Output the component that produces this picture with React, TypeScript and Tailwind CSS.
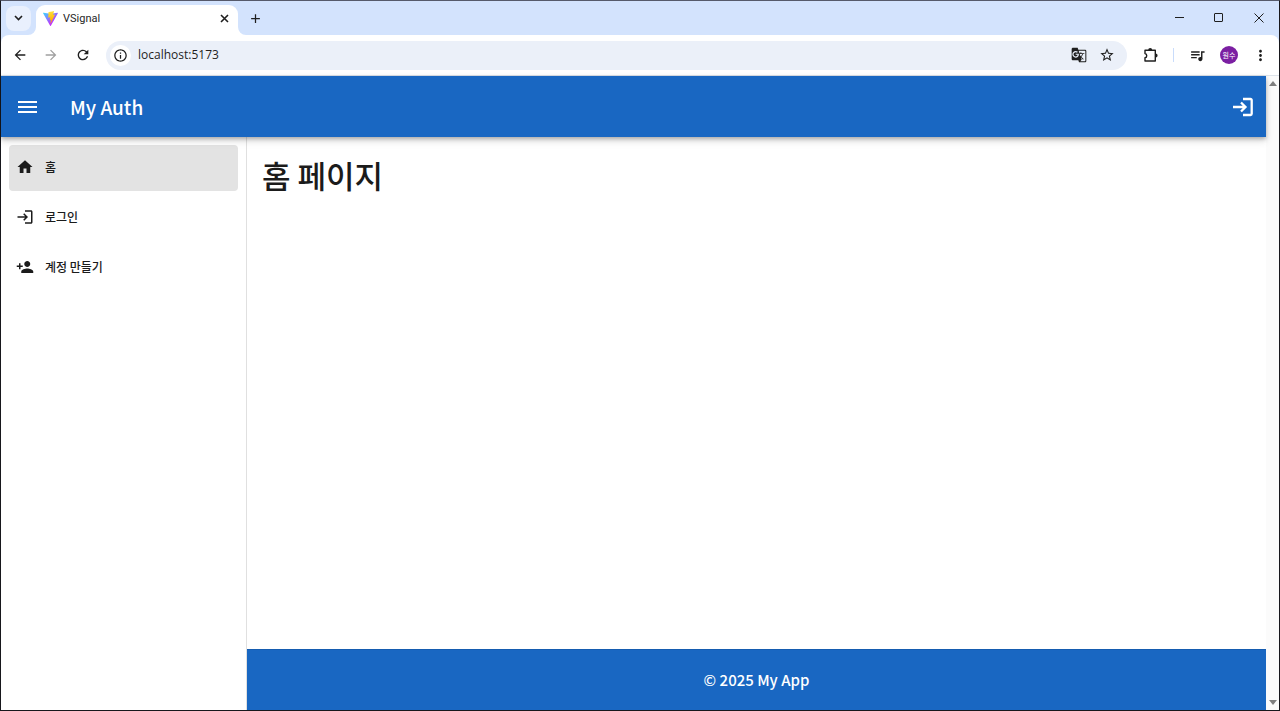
import type { ReactNode } from "react";
import {
  MdAdd,
  MdArrowBack,
  MdArrowForward,
  MdGTranslate,
  MdHome,
  MdInfoOutline,
  MdLogin,
  MdMoreVert,
  MdPersonAdd,
  MdQueueMusic,
  MdRefresh,
  MdStarOutline,
} from "react-icons/md";

interface NavItem {
  label: string;
  href: string;
  icon: ReactNode;
}

const navItems: NavItem[] = [
  { label: "홈", href: "#home", icon: <MdHome size={18} /> },
  { label: "로그인", href: "#login", icon: <MdLogin size={18} /> },
  { label: "계정 만들기", href: "#register", icon: <MdPersonAdd size={18} /> },
];

function ViteLogo() {
  return (
    <svg width="15" height="15" viewBox="0 0 256 257" aria-hidden="true">
      <defs>
        <linearGradient id="vite-body" x1="0%" x2="58%" y1="8%" y2="79%">
          <stop offset="0%" stopColor="#41D1FF" />
          <stop offset="100%" stopColor="#BD34FE" />
        </linearGradient>
        <linearGradient id="vite-bolt" x1="43%" x2="50%" y1="2%" y2="89%">
          <stop offset="0%" stopColor="#FFEA83" />
          <stop offset="8%" stopColor="#FFDD35" />
          <stop offset="100%" stopColor="#FFA800" />
        </linearGradient>
      </defs>
      <path
        fill="url(#vite-body)"
        d="M255 38 134 253c-2 5-9 5-12 0L1 38c-3-5 1-11 7-10l120 21a7 7 0 0 0 2 0l117-21c6-1 10 5 8 10Z"
      />
      <path
        fill="url(#vite-bolt)"
        d="M185 0 97 17a3 3 0 0 0-3 3l-5 91a3 3 0 0 0 4 4l25-6c2-1 4 1 4 4l-8 36c0 2 2 5 4 4l15-5c3-1 5 2 4 4l-11 56c-1 4 4 6 6 3l1-2 72-143c1-3-1-5-4-5l-25 5c-3 0-5-2-4-4l17-58c1-2-1-4-4-4Z"
      />
    </svg>
  );
}

function PuzzleIcon() {
  return (
    <svg
      width="16"
      height="16"
      viewBox="0 0 16 16"
      fill="none"
      stroke="currentColor"
      strokeWidth="1.4"
      strokeLinejoin="round"
      aria-hidden="true"
    >
      <path d="M2 3.300h10.300v10.700H2v-3.200a2.200 2.200 0 0 0 0-4.300Z" />
      <path
        fill="currentColor"
        stroke="none"
        d="M5.200 3a2 2 0 0 1 4 0ZM12.600 6.600a2 2 0 0 1 0 4Z"
      />
    </svg>
  );
}

function MenuIcon() {
  return (
    <svg width="25" height="25" stroke="currentColor" strokeWidth="2" aria-hidden="true">
      <path d="M3 8h19M3 13h19M3 18h19" />
    </svg>
  );
}

function LoginIcon() {
  return (
    <svg
      width="24"
      height="24"
      viewBox="0 0 24 24"
      fill="none"
      stroke="currentColor"
      strokeWidth="2.300"
      aria-hidden="true"
    >
      <path d="M12 4h7.500a1.200 1.200 0 0 1 1.200 1.200v13.600a1.200 1.200 0 0 1-1.200 1.200H12" />
      <path d="M2 12h12M10 7.500l4.500 4.500-4.500 4.500" />
    </svg>
  );
}

function TabStrip() {
  return (
    <div className="flex h-[34px] shrink-0 items-center bg-[#d3e3fd] text-[#1f1f1f]">
      <button
        aria-label="Search tabs"
        className="ml-[5px] flex size-[25px] items-center justify-center rounded-lg bg-[#e9f0fd]"
      >
        <svg width="9" height="6" fill="none" stroke="currentColor" strokeWidth="1.600" aria-hidden="true">
          <path d="m1 1 3.500 3.500L8 1" />
        </svg>
      </button>
      <div className="relative ml-[5px] flex h-[30px] w-[202px] items-center self-end rounded-t-[9px] bg-white pr-[9px] pb-1 pl-[7px]">
        <svg className="absolute bottom-0 -left-2" width="8" height="8" aria-hidden="true">
          <path d="M8 0v8H0a8 8 0 0 0 8-8Z" fill="#fff" />
        </svg>
        <svg className="absolute -right-2 bottom-0" width="8" height="8" aria-hidden="true">
          <path d="M0 0v8h8a8 8 0 0 1-8-8Z" fill="#fff" />
        </svg>
        <ViteLogo />
        <span className="ml-[5px] flex-1 pt-[2px] font-[Roboto,sans-serif] text-[11px]">VSignal</span>
        <button aria-label="Close tab">
          <svg width="9" height="9" stroke="currentColor" strokeWidth="1.600" aria-hidden="true">
            <path d="m1 1 7 7M8 1 1 8" />
          </svg>
        </button>
      </div>
      <button aria-label="New tab" className="ml-[10px]">
        <MdAdd size={15} />
      </button>
      <div className="ml-auto flex items-center">
        <button aria-label="Minimize" className="flex w-10 justify-center">
          <svg width="9" height="9" stroke="currentColor" aria-hidden="true">
            <path d="M0 3.500h9" />
          </svg>
        </button>
        <button aria-label="Maximize" className="flex w-10 justify-center">
          <svg width="10" height="10" fill="none" stroke="currentColor" aria-hidden="true">
            <rect x="0.5" y="0.5" width="8" height="8" rx="0.5" />
          </svg>
        </button>
        <button aria-label="Close" className="flex w-10 justify-center">
          <svg width="10" height="10" stroke="currentColor" aria-hidden="true">
            <path d="m.5.5 9 9M9.500.500l-9 9" />
          </svg>
        </button>
      </div>
    </div>
  );
}

function Toolbar() {
  return (
    <div className="shrink-0 bg-[#d3e3fd]">
      <div className="flex h-[41px] items-center rounded-t-lg border-b border-[#dde3ea] bg-white pl-[11px] text-[#1f1f1f]">
        <button aria-label="Back">
          <MdArrowBack size={16} />
        </button>
        <button aria-label="Forward" className="ml-[15px] text-[#a0a0a0]" disabled>
          <MdArrowForward size={16} />
        </button>
        <button aria-label="Reload" className="ml-4">
          <MdRefresh size={16} />
        </button>
        <div className="ml-[15px] flex h-[29px] flex-1 items-center rounded-full bg-[#ebf0f9] pr-3 pl-1">
          <button
            aria-label="Site information"
            className="flex size-[21px] items-center justify-center rounded-full bg-white"
          >
            <MdInfoOutline size={15} />
          </button>
          <input
            aria-label="Address"
            defaultValue="localhost:5173"
            className="ml-[7px] min-w-0 flex-1 bg-transparent font-['Open_Sans',sans-serif] text-[12px] outline-none"
          />
          <button aria-label="Translate this page">
            <MdGTranslate size={16} />
          </button>
          <button aria-label="Bookmark this tab" className="ml-3">
            <MdStarOutline size={16} />
          </button>
        </div>
        <button aria-label="Extensions" className="ml-4">
          <PuzzleIcon />
        </button>
        <span className="ml-[14px] h-[14px] w-px bg-[#c9dcfb]" />
        <button aria-label="Media control" className="ml-[15px]">
          <MdQueueMusic size={17} />
        </button>
        <button
          aria-label="Profile"
          className="ml-[14px] flex size-[18px] items-center justify-center rounded-full bg-[#7b1fa2] font-['Noto_Sans_CJK_KR',sans-serif] text-[7px] text-white"
        >
          원수
        </button>
        <button aria-label="Menu" className="mr-[10px] ml-[14px]">
          <MdMoreVert size={17} />
        </button>
      </div>
    </div>
  );
}

function AppHeader() {
  return (
    <header className="z-10 flex h-[61px] shrink-0 items-center bg-[#1967c2] pr-[11px] pl-[14px] text-white shadow-[0_2px_4px_rgba(0,0,0,0.25),0_4px_8px_rgba(0,0,0,0.12)]">
      <button aria-label="Toggle menu">
        <MenuIcon />
      </button>
      <p className="ml-[30px] flex-1 pt-px text-[19px] font-medium">My Auth</p>
      <button aria-label="로그인">
        <LoginIcon />
      </button>
    </header>
  );
}

function Sidebar() {
  return (
    <nav className="flex w-[246px] shrink-0 flex-col gap-1 border-r border-[#e0e0e0] p-2">
      {navItems.map((item, i) => (
        <a
          key={item.href}
          href={item.href}
          className={`flex h-[46px] items-center gap-[11px] rounded pr-2 pb-[2px] pl-[7px] text-[12px] font-medium text-[#1b1b1b] ${
            i === 0 ? "bg-[#e3e3e3]" : ""
          }`}
        >
          {item.icon}
          {item.label}
        </a>
      ))}
    </nav>
  );
}

function Scrollbar() {
  return (
    <div className="flex w-[13px] shrink-0 flex-col items-center justify-between bg-[#fbfbfb] py-[5px]">
      <svg width="8" height="5" fill="#7f7f7f" aria-hidden="true">
        <path d="M4 0 8 5H0Z" />
      </svg>
      <svg width="8" height="5" fill="#7f7f7f" aria-hidden="true">
        <path d="M0 0h8L4 5Z" />
      </svg>
    </div>
  );
}

export default function App() {
  return (
    <div className="flex h-screen flex-col border border-t-[#565a6b] border-r-[#17171c] border-b-[#17171c] border-l-[#17171c] bg-white">
      <TabStrip />
      <Toolbar />
      <div className="flex min-h-0 flex-1 font-['Noto_Sans_CJK_KR',sans-serif]">
        <div className="flex min-w-0 flex-1 flex-col">
          <AppHeader />
          <div className="flex min-h-0 flex-1">
            <Sidebar />
            <div className="flex min-w-0 flex-1 flex-col">
              <main className="flex-1 px-[15px] py-4">
                <h1 className="text-[31px] leading-[44px] font-medium text-[#1b1b1b]">홈 페이지</h1>
              </main>
              <footer className="flex h-[61px] shrink-0 items-center justify-center border-t border-[#155cb0] bg-[#1967c2] pt-px text-[15px] font-medium text-white">
                © 2025 My App
              </footer>
            </div>
          </div>
        </div>
        <Scrollbar />
      </div>
    </div>
  );
}
